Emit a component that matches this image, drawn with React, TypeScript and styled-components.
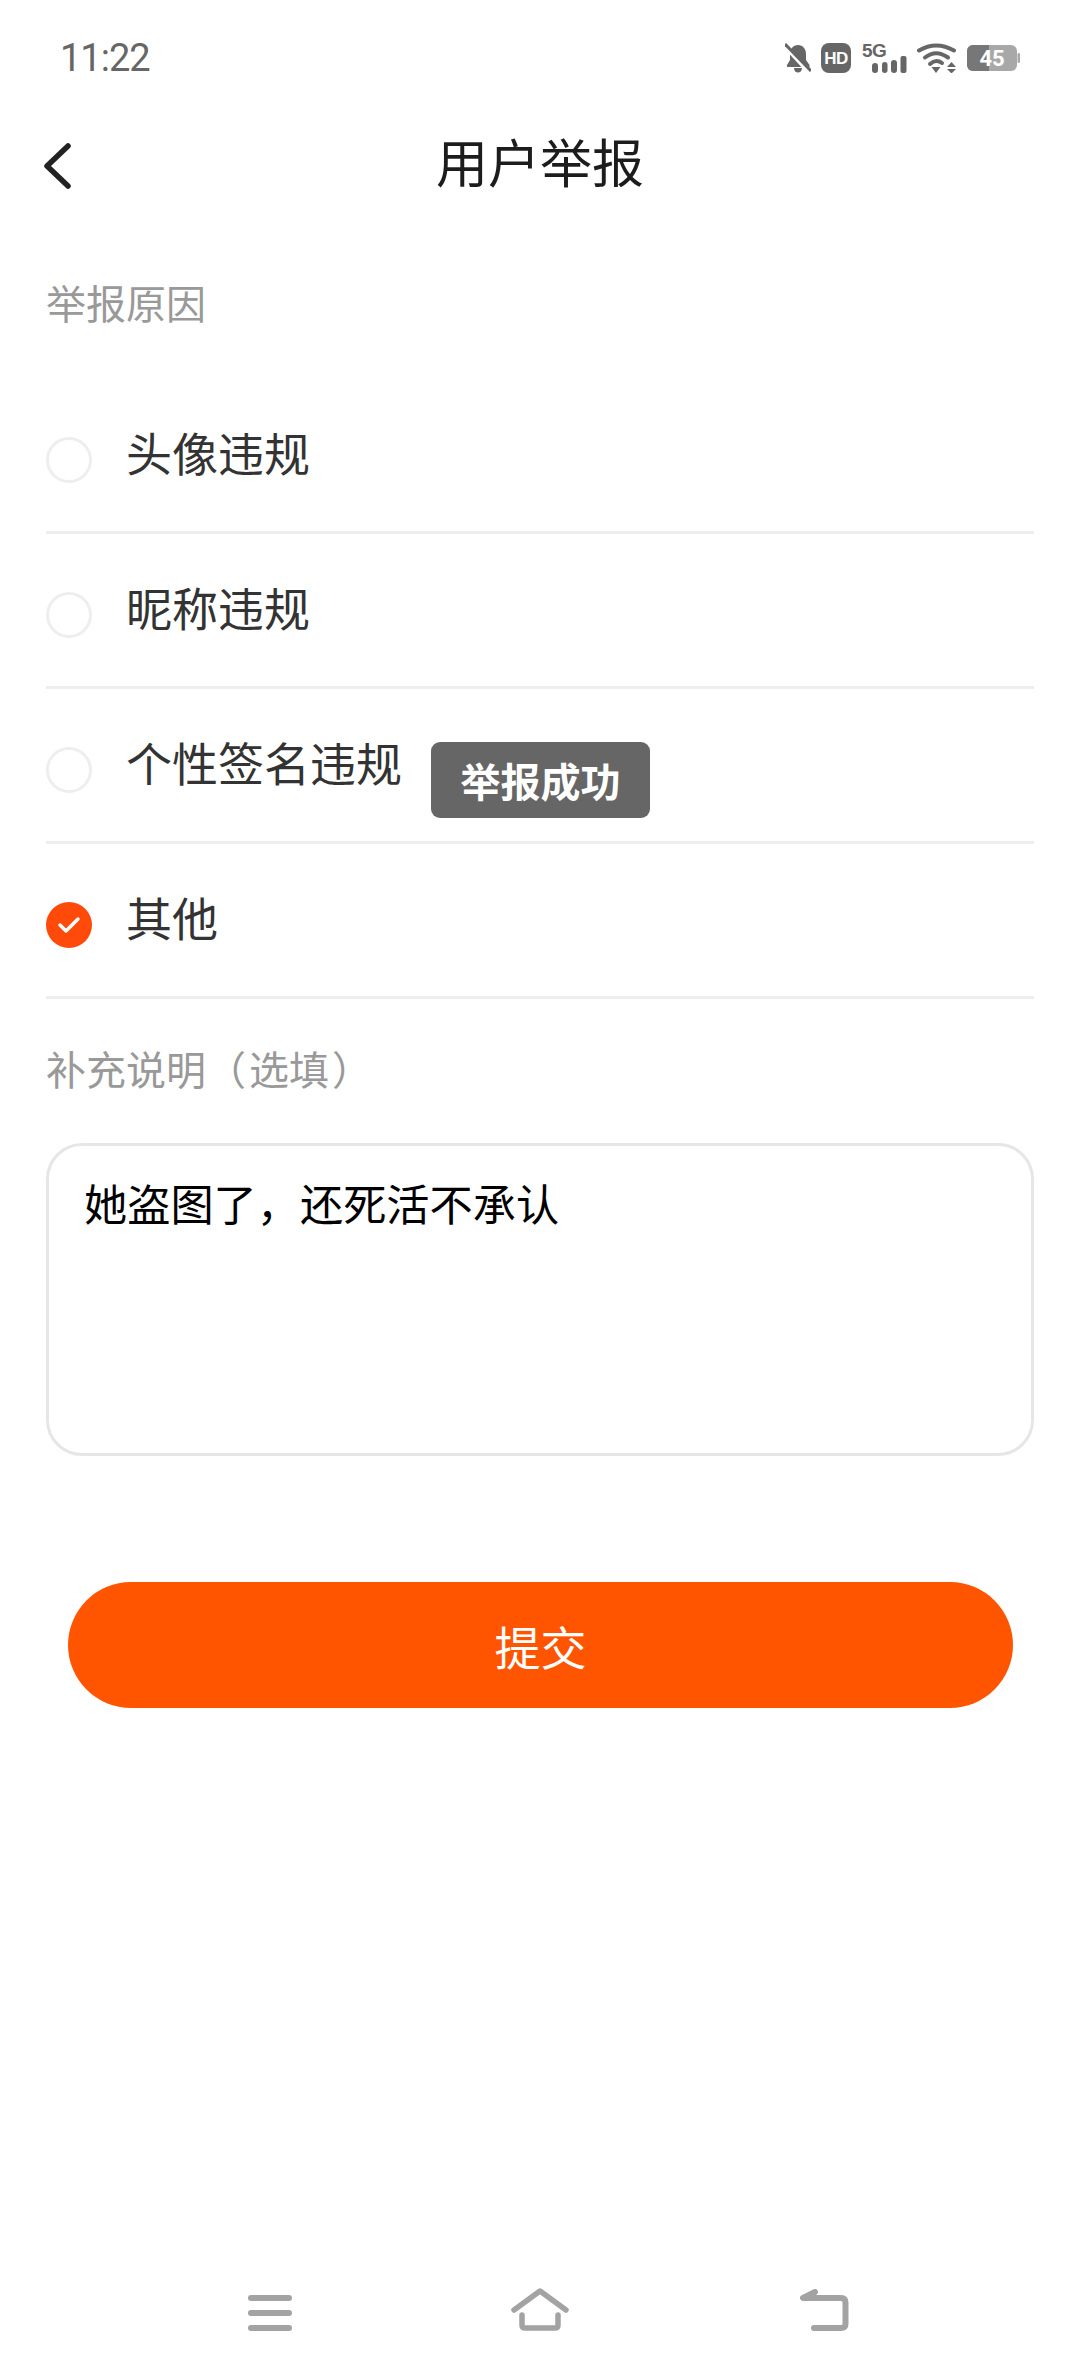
import React from "react";
import styled, { createGlobalStyle } from "styled-components";

const Global = createGlobalStyle`
  html, body { margin: 0; padding: 0; background: #fff; }
  * { box-sizing: border-box; }
`;

const CJK = `"Noto Sans CJK SC", "Noto Sans", sans-serif`;

const Page = styled.div`
  position: relative;
  width: 1080px;
  height: 2376px;
  display: flex;
  flex-direction: column;
  background: #fff;
  font-family: ${CJK};
  overflow: hidden;
`;

const StatusBar = styled.div`
  height: 110px;
  padding: 6px 60px 0 60px;
  display: flex;
  align-items: center;
  justify-content: space-between;
`;

const Time = styled.span`
  font-family: Roboto, sans-serif;
  font-size: 38px;
  color: #666;
  letter-spacing: -1px;
`;

const StatusIcons = styled.div`
  display: flex;
  align-items: center;
  height: 30px;
  gap: 10px;
`;

const NavBar = styled.header`
  position: relative;
  height: 110px;
  display: flex;
  align-items: center;
  justify-content: center;
`;

const BackButton = styled.button`
  position: absolute;
  left: 41px;
  top: 33px;
  width: 30px;
  height: 46px;
  padding: 0;
  border: 0;
  background: none;
  display: flex;
`;

const Title = styled.h1`
  margin: -8px 0 0;
  font-size: 52px;
  font-weight: 400;
  color: #1c1c1c;
  line-height: 1;
`;

const Content = styled.main`
  padding: 0 46px;
  display: flex;
  flex-direction: column;
`;

const SectionLabel = styled.div<{ $top: number; $bottom: number }>`
  margin: ${(p) => p.$top}px 0 ${(p) => p.$bottom}px;
  height: 56px;
  line-height: 56px;
  font-size: 40px;
  color: #999;
`;

const Paren = styled.span<{ $open?: boolean }>`
  display: inline-block;
  margin: ${(p) => (p.$open ? "0 3px 0 0" : "0 0 0 3px")};
`;

const Row = styled.div`
  height: 155px;
  display: flex;
  align-items: center;
  gap: 34px;
  border-bottom: 3px solid #eeeeee;
  padding-top: 9px;
`;

const Radio = styled.span<{ $checked?: boolean }>`
  flex: none;
  width: 46px;
  height: 46px;
  border-radius: 50%;
  border: ${(p) => (p.$checked ? "0" : "3px solid #eeeeee")};
  background: ${(p) => (p.$checked ? "#ff4a0a" : "#fff")};
  display: flex;
  align-items: center;
  justify-content: center;
`;

const RowText = styled.span`
  font-size: 46px;
  color: #333;
  line-height: 60px;
  margin-top: -17px;
`;

const TextBox = styled.div`
  height: 313px;
  border: 3px solid #e6e6e6;
  border-radius: 36px;
  padding: 28px 35px;
  font-size: 43.2px;
  line-height: 56px;
  color: #000;
`;

const SubmitButton = styled.button`
  margin: 126px 21px 0 22px;
  height: 126px;
  border: 0;
  border-radius: 63px;
  background: #ff5500;
  color: #fff;
  font-family: ${CJK};
  font-size: 46px;
`;

const Toast = styled.div`
  position: absolute;
  left: 431px;
  top: 742px;
  width: 219px;
  height: 76px;
  border-radius: 9px;
  background: #666;
  color: #fff;
  font-size: 40px;
  font-weight: 700;
  display: flex;
  align-items: center;
  justify-content: center;
`;

const BottomBar = styled.nav`
  margin-top: auto;
  padding: 0 231px 45px 248px;
  display: flex;
  justify-content: space-between;
  align-items: flex-end;
`;

const HomeSvg = styled.svg`
  margin-right: 12px;
`;

const SignalSvg = styled.svg`
  overflow: visible;
`;

const Bell = () => (
  <svg width="26" height="30" viewBox="0 0 26 30">
    <path d="M13 2c5 0 8 4 8 9v6l3.500 5v2H2v-2l3-5v-6c0-5 3-9 8-9zM9 25h8c0 3-2 4.500-4 4.500S9 28 9 25z" fill="#666" />
    <path d="M0 3l25 27" stroke="#fff" strokeWidth="4.500" />
    <path d="M0 1l26 27" stroke="#666" strokeWidth="3" />
  </svg>
);

const HD = () => (
  <svg width="30" height="30" viewBox="0 0 30 30">
    <rect width="30" height="30" rx="8" fill="#666" />
    <text x="15" y="21" textAnchor="middle" fontFamily="Liberation Sans" fontWeight="700" fontSize="17" letterSpacing="-0.5" fill="#fff">HD</text>
  </svg>
);

const Signal = () => (
  <SignalSvg width="46" height="30" viewBox="0 0 46 30">
    <text x="1" y="14" fontFamily="Liberation Sans" fontWeight="700" fontSize="19" letterSpacing="-0.5" fill="#666">5G</text>
    <rect x="11" y="20" width="6" height="10" rx="3" fill="#666" />
    <rect x="21" y="19" width="5.500" height="11" rx="2.750" fill="#666" />
    <rect x="30" y="17" width="6" height="13" rx="3" fill="#666" />
    <rect x="39.500" y="13" width="6" height="17" rx="2" fill="#666" />
  </SignalSvg>
);

const Wifi = () => (
  <svg width="40" height="30" viewBox="0 0 40 30" fill="none">
    <path d="M2 7.500Q19-2.500 37 7.500" stroke="#666" strokeWidth="4" strokeLinecap="round" />
    <path d="M8 14.500Q19 6 31 14.500" stroke="#666" strokeWidth="4" strokeLinecap="round" />
    <path d="M13 21Q19 15.500 25 20" stroke="#666" strokeWidth="4" strokeLinecap="round" />
    <path d="M14.500 24h9L19 30z" fill="#666" />
    <path d="M34.500 19l4.500 5h-9zM30 26h9l-4.500 4.500z" fill="#666" />
  </svg>
);

const Battery = () => (
  <svg width="53" height="26" viewBox="0 0 53 26">
    <rect width="50" height="26" rx="6" fill="#a8a8a8" />
    <path d="M6 0h16v26H6a6 6 0 0 1-6-6V6a6 6 0 0 1 6-6z" fill="#777" />
    <rect x="50.500" y="8" width="2.500" height="10" rx="1.250" fill="#a8a8a8" />
    <text x="25" y="21" textAnchor="middle" fontFamily="Roboto" fontWeight="700" fontSize="22" fill="#fff">45</text>
  </svg>
);

const Check = () => (
  <svg width="24" height="18" viewBox="0 0 24 18" fill="none">
    <path d="M3 9l6 6L21 3" stroke="#fff" strokeWidth="3.500" strokeLinecap="round" strokeLinejoin="round" />
  </svg>
);

const MenuIcon = () => (
  <svg width="44" height="36" viewBox="0 0 44 36" fill="#a3a3a3">
    <rect y="0" width="44" height="6" rx="3" />
    <rect y="15" width="44" height="6" rx="3" />
    <rect y="30" width="44" height="6" rx="3" />
  </svg>
);

const HomeIcon = () => (
  <HomeSvg width="58" height="43" viewBox="0 0 58 43" fill="none" stroke="#a3a3a3" strokeWidth="5.500" strokeLinecap="round" strokeLinejoin="round">
    <path d="M3 22L29 3l26 19" />
    <path d="M11 27v10q0 3 3 3h30q3 0 3-3V27" />
  </HomeSvg>
);

const ReturnIcon = () => (
  <svg width="49" height="42" viewBox="0 0 49 42" fill="none" stroke="#a3a3a3" strokeWidth="6" strokeLinecap="round" strokeLinejoin="round">
    <path d="M15 3L3 9h38q4.500 0 4.500 4.500V35q0 4-4.500 4H14" />
  </svg>
);

const reasons = ["头像违规", "昵称违规", "个性签名违规", "其他"];

export default function App() {
  return (
    <Page>
      <Global />
      <StatusBar>
        <Time>11:22</Time>
        <StatusIcons>
          <Bell />
          <HD />
          <Signal />
          <Wifi />
          <Battery />
        </StatusIcons>
      </StatusBar>
      <NavBar>
        <BackButton aria-label="返回">
          <svg width="30" height="46" viewBox="0 0 30 46" fill="none">
            <path d="M27 3L6 23l21 20" stroke="#222" strokeWidth="5.500" strokeLinecap="round" strokeLinejoin="round" />
          </svg>
        </BackButton>
        <Title>用户举报</Title>
      </NavBar>
      <Content>
        <SectionLabel $top={54} $bottom={49}>举报原因</SectionLabel>
        {reasons.map((r, i) => (
          <Row key={r}>
            <Radio $checked={i === 3}>{i === 3 && <Check />}</Radio>
            <RowText>{r}</RowText>
          </Row>
        ))}
        <SectionLabel $top={41} $bottom={47}>
          补充说明<Paren $open>（</Paren>选填<Paren>）</Paren>
        </SectionLabel>
        <TextBox>她盗图了，还死活不承认</TextBox>
        <SubmitButton>提交</SubmitButton>
      </Content>
      <Toast>举报成功</Toast>
      <BottomBar>
        <MenuIcon />
        <HomeIcon />
        <ReturnIcon />
      </BottomBar>
    </Page>
  );
}
